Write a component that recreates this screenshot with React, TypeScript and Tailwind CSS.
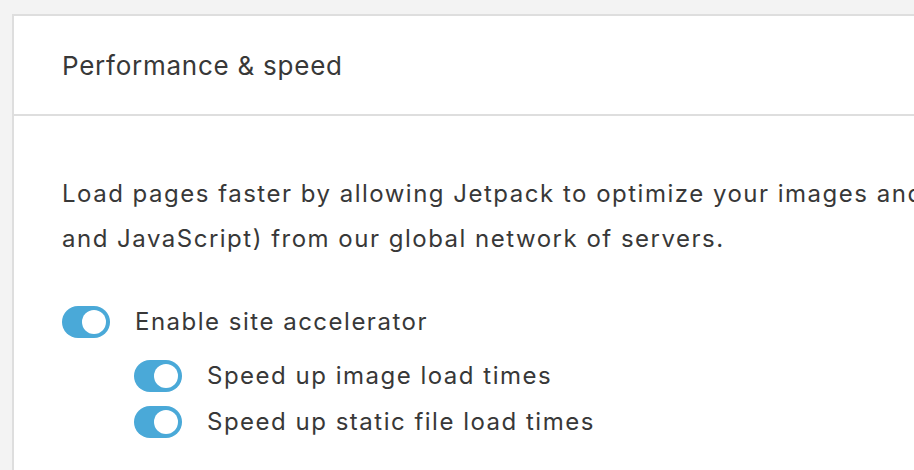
import React from "react";

const Toggle = () => {
    return (
        <div className="flex h-[32px] w-[48px] shrink-0 items-center justify-end rounded-full bg-[#4aa9d8] pr-[4px]">
            <div className="h-[24px] w-[24px] rounded-full bg-white" />
        </div>
    );
};

const ToggleRow = ({ label }: { label: string }) => {
    return (
        <div className="flex h-[32px] items-center gap-[25px]">
            <Toggle />
            <span className="whitespace-nowrap text-[24px] tracking-[1.5px]">{label}</span>
        </div>
    );
};

export default function App() {
    return (
        <div
            className="h-[470px] w-full overflow-hidden bg-[#f3f3f3] pl-[12px] pt-[14px] text-[#383838]"
            style={{ fontFamily: "Inter, 'Noto Sans', sans-serif" }}
        >
            <div className="w-[1100px] border-l-2 border-t-2 border-[#dedede] bg-white">
                {/* Header */}
                <div className="flex h-[100px] items-center border-b-2 border-[#dedede] pl-[48px]">
                    <h2 className="text-[26px] font-normal tracking-[0.75px]">Performance &amp; speed</h2>
                </div>

                {/* Body */}
                <div className="px-[48px] pt-[55px] pb-[40px]">
                    <p className="whitespace-nowrap text-[24px] leading-[45px] tracking-[1.5px]">
                        Load pages faster by allowing Jetpack to optimize your images and serve your images and static files (like CSS
                        <br />
                        and JavaScript) from our global network of servers.
                    </p>

                    <div className="mt-[45px]">
                        <ToggleRow label="Enable site accelerator" />
                        <div className="mt-[22px] flex flex-col gap-[14px] pl-[72px]">
                            <ToggleRow label="Speed up image load times" />
                            <ToggleRow label="Speed up static file load times" />
                        </div>
                    </div>
                </div>
            </div>
        </div>
    );
}
